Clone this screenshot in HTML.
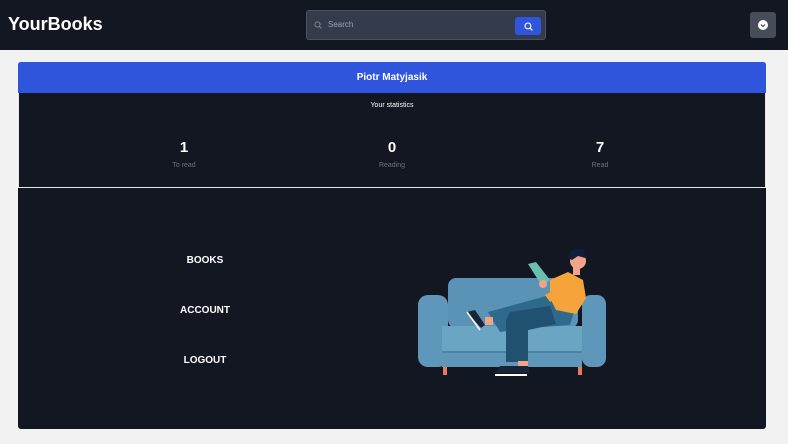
<!DOCTYPE html>
<html><head><style>
*{margin:0;padding:0;box-sizing:border-box}
body{width:788px;height:444px;background:#f2f2f2;font-family:"Liberation Sans",sans-serif;position:relative;overflow:hidden}
.hdr{position:absolute;left:0;top:0;width:788px;height:50px;background:#131722}
.logo{position:absolute;left:8px;top:14px;color:#fff;font-weight:bold;font-size:18px}
.search{position:absolute;left:306px;top:10px;width:240px;height:30px;background:#343c4c;border:1px solid #4a5263;border-radius:3px}
.search span{position:absolute;left:21px;top:9px;font-size:8px;color:#9aa1ad}
.sbtn{position:absolute;left:208px;top:6px;width:26px;height:18px;background:#2f55dc;border-radius:3px}
.av{position:absolute;left:750px;top:12px;width:26px;height:26px;background:#464d59;border-radius:3px}
.card{position:absolute;left:18px;top:62px;width:748px;height:367px;background:#131722;border-radius:3px;overflow:hidden}
.blue{height:31px;background:#2f55dc;color:#fff;font-weight:bold;font-size:10px;text-align:center;line-height:32px}
.stats{position:absolute;top:31px;left:0;width:748px;height:95px;border-bottom:1px solid #e5e7eb;border-left:1px solid #e5e7eb;border-right:1px solid #e5e7eb}
.t{position:absolute;top:9px;width:100%;text-align:center;color:#fff;font-size:7px}
.s{position:absolute;top:46px;width:80px;text-align:center;color:#fff}
.s b{display:block;font-size:15px}
.s i{display:block;font-style:normal;font-size:7px;color:#6b7280;margin-top:6px}
.m{position:absolute;width:100px;text-align:center;color:#fff;font-weight:bold;font-size:10px}
</style></head><body>
<div class="hdr">
<div class="logo">YourBooks</div>
<div class="search"><svg style="position:absolute;left:7px;top:10px" width="8" height="8" viewBox="0 0 8 8"><circle cx="3.5" cy="3.5" r="2.6" fill="none" stroke="#8a919c" stroke-width="0.8"/><path d="M5.5 5.5L7.5 7.5" stroke="#8a919c" stroke-width="0.8"/></svg><span>Search</span>
<div class="sbtn"><svg style="position:absolute;left:9px;top:5px" width="9" height="9" viewBox="0 0 8 8"><circle cx="3.5" cy="3.5" r="2.6" fill="none" stroke="#fff" stroke-width="1"/><path d="M5.5 5.5L7.5 7.5" stroke="#fff" stroke-width="1"/></svg></div></div>
<div class="av"><div style="position:absolute;left:8px;top:8px;width:10px;height:10px;border-radius:50%;background:#fff"></div><svg style="position:absolute;left:10px;top:10px" width="6" height="6" viewBox="0 0 6 6"><path d="M1 2.5L3 4.5L5 2.5" fill="none" stroke="#464d59" stroke-width="1.2"/></svg></div>
</div>
<div class="card">
<div class="blue">Piotr Matyjasik</div>
<div class="stats">
<div class="t">Your statistics</div>
<div class="s" style="left:125px"><b>1</b><i>To read</i></div>
<div class="s" style="left:333px"><b>0</b><i>Reading</i></div>
<div class="s" style="left:541px"><b>7</b><i>Read</i></div>
</div>
<div class="m" style="left:137px;top:193px">BOOKS</div>
<div class="m" style="left:137px;top:243px">ACCOUNT</div>
<div class="m" style="left:137px;top:293px">LOGOUT</div>
<svg style="position:absolute;left:382px;top:178px" width="220" height="150" viewBox="0 0 220 150">
<rect x="48" y="38" width="130" height="50" rx="8" fill="#5b93b6"/>
<rect x="18" y="55" width="30" height="72" rx="10" fill="#5f97ba"/>
<rect x="182" y="55" width="24" height="72" rx="9" fill="#5f97ba"/>
<rect x="42" y="86" width="140" height="26" fill="#6aa6c4"/>
<rect x="42" y="112" width="140" height="15" fill="#5f97ba"/>
<rect x="42" y="111" width="140" height="2" fill="#4f829f"/>
<rect x="43" y="127" width="4" height="8" fill="#e67a5e"/>
<rect x="178" y="127" width="4" height="8" fill="#e67a5e"/>
<path d="M88 72 L150 55 L176 66 L170 85 L130 88 L100 92 Z" fill="#2f6a8c"/>
<path d="M110 72 L150 66 L156 84 L128 90 L128 122 L106 122 L106 80 Z" fill="#215170"/>
<path d="M150 40 L168 32 L183 40 L186 58 L176 74 L156 70 L150 58 Z" fill="#f4a43a"/>
<path d="M145 55 L168 42 L174 48 L150 62 Z" fill="#f4a43a"/>
<path d="M128 24 L136 22 L150 40 L142 46 Z" fill="#6bbfb0"/>
<circle cx="143" cy="44" r="4" fill="#f2a48a"/>
<rect x="173" y="26" width="7" height="9" fill="#f2a48a"/>
<circle cx="178" cy="21" r="8" fill="#f2a48a"/>
<path d="M168 18 Q170 6 184 9 L185 18 L178 16 L172 20 Z" fill="#0f1e3a"/>
<path d="M67 72 L75 70 L85 85 L81 88 Z" fill="#1a2438"/>
<path d="M67 72 L80 90" stroke="#fff" stroke-width="1.5"/>
<rect x="85" y="77" width="8" height="8" fill="#f2a48a"/>
<rect x="118" y="121" width="10" height="6" fill="#f2a48a"/>
<path d="M100 126 L128 126 L130 133 L96 133 Z" fill="#1a2438"/>
<rect x="95" y="134" width="32" height="2" fill="#fff"/>
</svg>
</div>
</body></html>
